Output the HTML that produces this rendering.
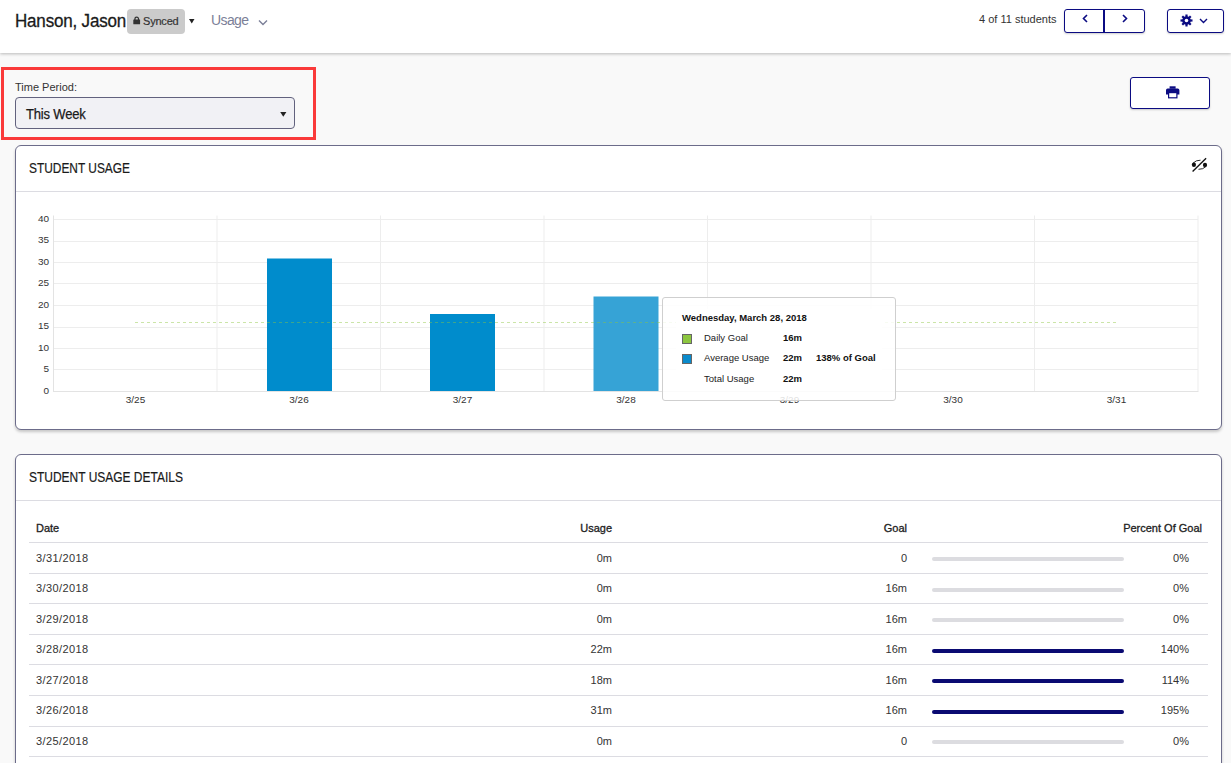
<!DOCTYPE html>
<html><head><meta charset="utf-8">
<style>
*{box-sizing:border-box;margin:0;padding:0}
html,body{width:1231px;height:763px;overflow:hidden;background:#f9f9f9;font-family:"Liberation Sans",sans-serif;color:#222}
.abs{position:absolute}
#hdr{position:absolute;left:0;top:0;width:1231px;height:53px;background:#fff;box-shadow:0 1px 3px rgba(0,0,0,0.26)}
.t{position:absolute;white-space:nowrap;line-height:1}
.badge{position:absolute;left:127px;top:9px;width:58px;height:25px;background:#cbcbcb;border-radius:4px}
.btn{position:absolute;background:#fff;border:1.5px solid #0b0b82;border-radius:3px;box-shadow:0 1px 2px rgba(0,0,0,0.2)}
.redbox{position:absolute;left:1px;top:67px;width:315px;height:73px;border:3px solid #fa3a3a}
.select{position:absolute;left:15px;top:97px;width:280px;height:32px;border:1px solid #62627e;border-radius:4px;background:#f1f1f5}
.panel{position:absolute;left:15px;width:1207px;background:#fff;border:1px solid #6c6c8a;border-radius:6px;box-shadow:0 2px 3px rgba(0,0,0,0.2)}
.divider{position:absolute;left:0;right:0;height:1px;background:#dcdce2}
.rowline{position:absolute;left:29px;width:1179px;height:1px;background:#dcdce2}
.bar{position:absolute;left:932px;width:192px;height:4px;border-radius:2px;background:#dcdce0}
.bar.on{background:#0a0a72}
</style></head><body>
<div id="hdr">
  <div class="t" style="left:15px;top:12px;font-size:18px;color:#1a1a1a;letter-spacing:-0.2px;transform:scaleX(0.945);transform-origin:0 0;-webkit-text-stroke:0.3px #1a1a1a">Hanson, Jason</div>
  <div class="badge"></div>
  <svg class="abs" style="left:133px;top:15.5px" width="8" height="9" viewBox="0 0 8 9"><path d="M1.9 4.2V2.9a1.8 1.8 0 0 1 3.6 0V4.2" fill="none" stroke="#333" stroke-width="1.3"/><rect x="0.3" y="3.6" width="6.8" height="4.6" rx="0.5" fill="#333"/></svg>
  <div class="t" style="left:143px;top:16px;font-size:11px;color:#333;letter-spacing:-0.2px;-webkit-text-stroke:0.2px #333">Synced</div>
  <svg class="abs" style="left:188.7px;top:19px" width="6" height="5" viewBox="0 0 6 5"><path d="M0 0H5.5L2.75 4.6Z" fill="#222"/></svg>
  <div class="t" style="left:211px;top:13px;font-size:14px;color:#7b7f98;letter-spacing:-0.6px">Usage</div>
  <svg class="abs" style="left:258px;top:18.8px" width="10" height="7" viewBox="0 0 10 7"><path d="M1 1.5L5 5.5L9 1.5" fill="none" stroke="#7b7f98" stroke-width="1.4"/></svg>

  <div class="t" style="left:979px;top:14px;font-size:11px;color:#333">4 of 11 students</div>
  <div class="btn" style="left:1064px;top:9px;width:81px;height:24px"></div>
  <div class="abs" style="left:1103.2px;top:10px;width:2px;height:22px;background:#0b0b82"></div>
  <svg class="abs" style="left:1081px;top:14px" width="8" height="9" viewBox="0 0 8 9"><path d="M6 1L2.5 4.5L6 8" fill="none" stroke="#0b0b82" stroke-width="1.6"/></svg>
  <svg class="abs" style="left:1121px;top:14px" width="8" height="9" viewBox="0 0 8 9"><path d="M2 1L5.5 4.5L2 8" fill="none" stroke="#0b0b82" stroke-width="1.6"/></svg>
  <div class="btn" style="left:1167px;top:9px;width:57px;height:24px"></div>
  <svg class="abs" style="left:1180px;top:14px" width="13" height="13" viewBox="0 0 13 13"><g fill="#0b0b82"><circle cx="6.5" cy="6.5" r="4.3"/><rect x="5.4" y="0.5" width="2.2" height="12" transform="rotate(0 6.5 6.5)"/><rect x="5.4" y="0.5" width="2.2" height="12" transform="rotate(45 6.5 6.5)"/><rect x="5.4" y="0.5" width="2.2" height="12" transform="rotate(90 6.5 6.5)"/><rect x="5.4" y="0.5" width="2.2" height="12" transform="rotate(135 6.5 6.5)"/></g><circle cx="6.5" cy="6.5" r="1.8" fill="#fff"/></svg>
  <svg class="abs" style="left:1199px;top:18px" width="9" height="6" viewBox="0 0 9 6"><path d="M1 1L4.5 4.5L8 1" fill="none" stroke="#0b0b82" stroke-width="1.4"/></svg>
</div>

<div class="redbox"></div>
<div class="t" style="left:15px;top:82px;font-size:11px;color:#333">Time Period:</div>
<div class="select"></div>
<div class="t" style="left:26px;top:107px;font-size:14px;color:#1a1a1a;letter-spacing:-0.2px;transform:scaleX(0.93);transform-origin:0 0;-webkit-text-stroke:0.25px #1a1a1a">This Week</div>
<svg class="abs" style="left:280px;top:112px" width="7" height="5" viewBox="0 0 7 5"><path d="M0.2 0H6.4L3.3 4.8Z" fill="#222"/></svg>

<div class="btn" style="left:1130px;top:77px;width:80px;height:32px;border-width:1.7px"></div>
<svg class="abs" style="left:1166px;top:86px" width="14" height="13" viewBox="0 0 14 13"><g fill="#0b0b82"><rect x="3.6" y="0.3" width="6" height="2.4"/><path d="M1.6 2.6H11.8A1.6 1.6 0 0 1 13.4 4.2V8.6H0V4.2A1.6 1.6 0 0 1 1.6 2.6Z"/></g><rect x="2.6" y="6.6" width="8.3" height="5.2" fill="#fff" stroke="#0b0b82" stroke-width="1.2"/></svg>

<div class="panel" style="top:145px;height:285px">
  <div class="t" style="left:13px;top:15px;font-size:14px;color:#1a1a1a;transform:scaleX(0.85);transform-origin:0 0;-webkit-text-stroke:0.2px #1a1a1a">STUDENT USAGE</div>
  <div class="divider" style="top:45px"></div>
</div>
<svg class="abs" style="left:1186px;top:152px" width="26" height="26" viewBox="0 0 26 26"><g fill="#111"><ellipse cx="7.9" cy="12.7" rx="2.1" ry="2.2"/><ellipse cx="19" cy="12.9" rx="2.1" ry="2.2"/></g><g fill="none" stroke="#111"><path d="M7 11.2Q10 8 14.5 8.2" stroke-width="0.9"/><path d="M20 14.5Q17 17.5 12.5 17.3" stroke-width="0.9"/><path d="M6.6 19.4L20.1 6.3" stroke-width="1.35"/></g></svg>

<svg class="abs" style="left:0;top:0" width="1231" height="763" viewBox="0 0 1231 763" font-family="Liberation Sans" font-size="10" fill="#333">
  <g stroke="#ededed" stroke-width="1">
    <path d="M53 219.5H1198M53 241.5H1198M53 262.5H1198M53 283.5H1198M53 305.5H1198M53 327.5H1198M53 348.5H1198M53 369.5H1198"/>
    <path d="M217 215.5V391M380.5 215.5V391M544 215.5V391M707.5 215.5V391M871 215.5V391M1034.5 215.5V391M1198 215.5V391"/>
  </g>
  <path d="M53.5 215.5V391.5M53 391.5H1198.5" stroke="#e3e3e3" stroke-width="1"/>
  <g text-anchor="end">
    <text transform="translate(49,221.9) scale(1,0.86)">40</text><text transform="translate(49,243.4) scale(1,0.86)">35</text><text transform="translate(49,264.9) scale(1,0.86)">30</text><text transform="translate(49,286.4) scale(1,0.86)">25</text><text transform="translate(49,307.9) scale(1,0.86)">20</text><text transform="translate(49,329.4) scale(1,0.86)">15</text><text transform="translate(49,350.9) scale(1,0.86)">10</text><text transform="translate(49,372.4) scale(1,0.86)">5</text><text transform="translate(49,393.9) scale(1,0.86)">0</text>
  </g>
  <g text-anchor="middle">
    <text transform="translate(135.5,402.9) scale(1,0.86)">3/25</text><text transform="translate(299,402.9) scale(1,0.86)">3/26</text><text transform="translate(462.5,402.9) scale(1,0.86)">3/27</text><text transform="translate(626,402.9) scale(1,0.86)">3/28</text><text transform="translate(789.5,402.9) scale(1,0.86)">3/29</text><text transform="translate(953,402.9) scale(1,0.86)">3/30</text><text transform="translate(1116.5,402.9) scale(1,0.86)">3/31</text>
  </g>
  <rect x="267" y="258.5" width="65" height="132.5" fill="#008ccc"/>
  <rect x="430" y="314" width="65" height="77" fill="#008ccc"/>
  <rect x="593.5" y="296.5" width="65" height="94.5" fill="#36a3d6"/>
  <path d="M135 322.5H1116" stroke="rgba(140,198,63,0.45)" stroke-width="1" stroke-dasharray="3,3"/>
</svg>

<div class="abs" style="left:662px;top:297px;width:234px;height:104px;background:rgba(255,255,255,0.85);border:1px solid #cfcfcf;border-radius:3px"></div>
<div class="abs" style="left:676px;top:309px;width:206px;height:82px;background:#fff"></div>
<div class="t" style="left:682px;top:313px;font-size:9.5px;font-weight:bold;color:#111">Wednesday, March 28, 2018</div>
<div class="abs" style="left:682px;top:334px;width:10px;height:10px;background:#8cc63f;border:1px solid #666"></div>
<div class="abs" style="left:682px;top:354px;width:10px;height:10px;background:#0a8acb;border:1px solid #666"></div>
<div class="t" style="left:704px;top:333px;font-size:9.5px;color:#222">Daily Goal</div>
<div class="t" style="left:783px;top:333px;font-size:9.5px;font-weight:bold;color:#111">16m</div>
<div class="t" style="left:704px;top:353px;font-size:9.5px;color:#222">Average Usage</div>
<div class="t" style="left:783px;top:353px;font-size:9.5px;font-weight:bold;color:#111">22m</div>
<div class="t" style="left:816px;top:353px;font-size:9.5px;font-weight:bold;color:#111">138% of Goal</div>
<div class="t" style="left:704px;top:374px;font-size:9.5px;color:#222">Total Usage</div>
<div class="t" style="left:783px;top:374px;font-size:9.5px;font-weight:bold;color:#111">22m</div>

<div class="panel" style="top:454px;height:330px">
  <div class="t" style="left:13px;top:15px;font-size:14px;color:#1a1a1a;transform:scaleX(0.855);transform-origin:0 0;-webkit-text-stroke:0.2px #1a1a1a">STUDENT USAGE DETAILS</div>
  <div class="divider" style="top:45px"></div>
</div>
<div class="t" style="left:36px;top:523px;font-size:11px;color:#222;-webkit-text-stroke:0.3px #222">Date</div>
<div class="t" style="right:619px;top:523px;font-size:11px;color:#222;-webkit-text-stroke:0.3px #222">Usage</div>
<div class="t" style="right:324px;top:523px;font-size:11px;color:#222;-webkit-text-stroke:0.3px #222">Goal</div>
<div class="t" style="right:29px;top:523px;font-size:11px;color:#222;-webkit-text-stroke:0.3px #222">Percent Of Goal</div>
<div class="rowline" style="top:542px"></div>
<div class="rowline" style="top:573px"></div>
<div class="rowline" style="top:603px"></div>
<div class="rowline" style="top:634px"></div>
<div class="rowline" style="top:664px"></div>
<div class="rowline" style="top:695px"></div>
<div class="rowline" style="top:726px"></div>
<div class="rowline" style="top:756px"></div>
<div class="t" style="left:36px;top:552.5px;font-size:11px;color:#333;letter-spacing:0.4px">3/31/2018</div>
<div class="t" style="right:619px;top:552.5px;font-size:11px;color:#333">0m</div>
<div class="t" style="right:324px;top:552.5px;font-size:11px;color:#333">0</div>
<div class="bar" style="top:557.0px"></div>
<div class="t" style="right:42px;top:552.5px;font-size:11px;color:#333">0%</div>
<div class="t" style="left:36px;top:583.0px;font-size:11px;color:#333;letter-spacing:0.4px">3/30/2018</div>
<div class="t" style="right:619px;top:583.0px;font-size:11px;color:#333">0m</div>
<div class="t" style="right:324px;top:583.0px;font-size:11px;color:#333">16m</div>
<div class="bar" style="top:587.5px"></div>
<div class="t" style="right:42px;top:583.0px;font-size:11px;color:#333">0%</div>
<div class="t" style="left:36px;top:613.6px;font-size:11px;color:#333;letter-spacing:0.4px">3/29/2018</div>
<div class="t" style="right:619px;top:613.6px;font-size:11px;color:#333">0m</div>
<div class="t" style="right:324px;top:613.6px;font-size:11px;color:#333">16m</div>
<div class="bar" style="top:618.1px"></div>
<div class="t" style="right:42px;top:613.6px;font-size:11px;color:#333">0%</div>
<div class="t" style="left:36px;top:644.1px;font-size:11px;color:#333;letter-spacing:0.4px">3/28/2018</div>
<div class="t" style="right:619px;top:644.1px;font-size:11px;color:#333">22m</div>
<div class="t" style="right:324px;top:644.1px;font-size:11px;color:#333">16m</div>
<div class="bar on" style="top:648.6px"></div>
<div class="t" style="right:42px;top:644.1px;font-size:11px;color:#333">140%</div>
<div class="t" style="left:36px;top:674.7px;font-size:11px;color:#333;letter-spacing:0.4px">3/27/2018</div>
<div class="t" style="right:619px;top:674.7px;font-size:11px;color:#333">18m</div>
<div class="t" style="right:324px;top:674.7px;font-size:11px;color:#333">16m</div>
<div class="bar on" style="top:679.2px"></div>
<div class="t" style="right:42px;top:674.7px;font-size:11px;color:#333">114%</div>
<div class="t" style="left:36px;top:705.3px;font-size:11px;color:#333;letter-spacing:0.4px">3/26/2018</div>
<div class="t" style="right:619px;top:705.3px;font-size:11px;color:#333">31m</div>
<div class="t" style="right:324px;top:705.3px;font-size:11px;color:#333">16m</div>
<div class="bar on" style="top:709.8px"></div>
<div class="t" style="right:42px;top:705.3px;font-size:11px;color:#333">195%</div>
<div class="t" style="left:36px;top:735.8px;font-size:11px;color:#333;letter-spacing:0.4px">3/25/2018</div>
<div class="t" style="right:619px;top:735.8px;font-size:11px;color:#333">0m</div>
<div class="t" style="right:324px;top:735.8px;font-size:11px;color:#333">0</div>
<div class="bar" style="top:740.3px"></div>
<div class="t" style="right:42px;top:735.8px;font-size:11px;color:#333">0%</div>
</body></html>
